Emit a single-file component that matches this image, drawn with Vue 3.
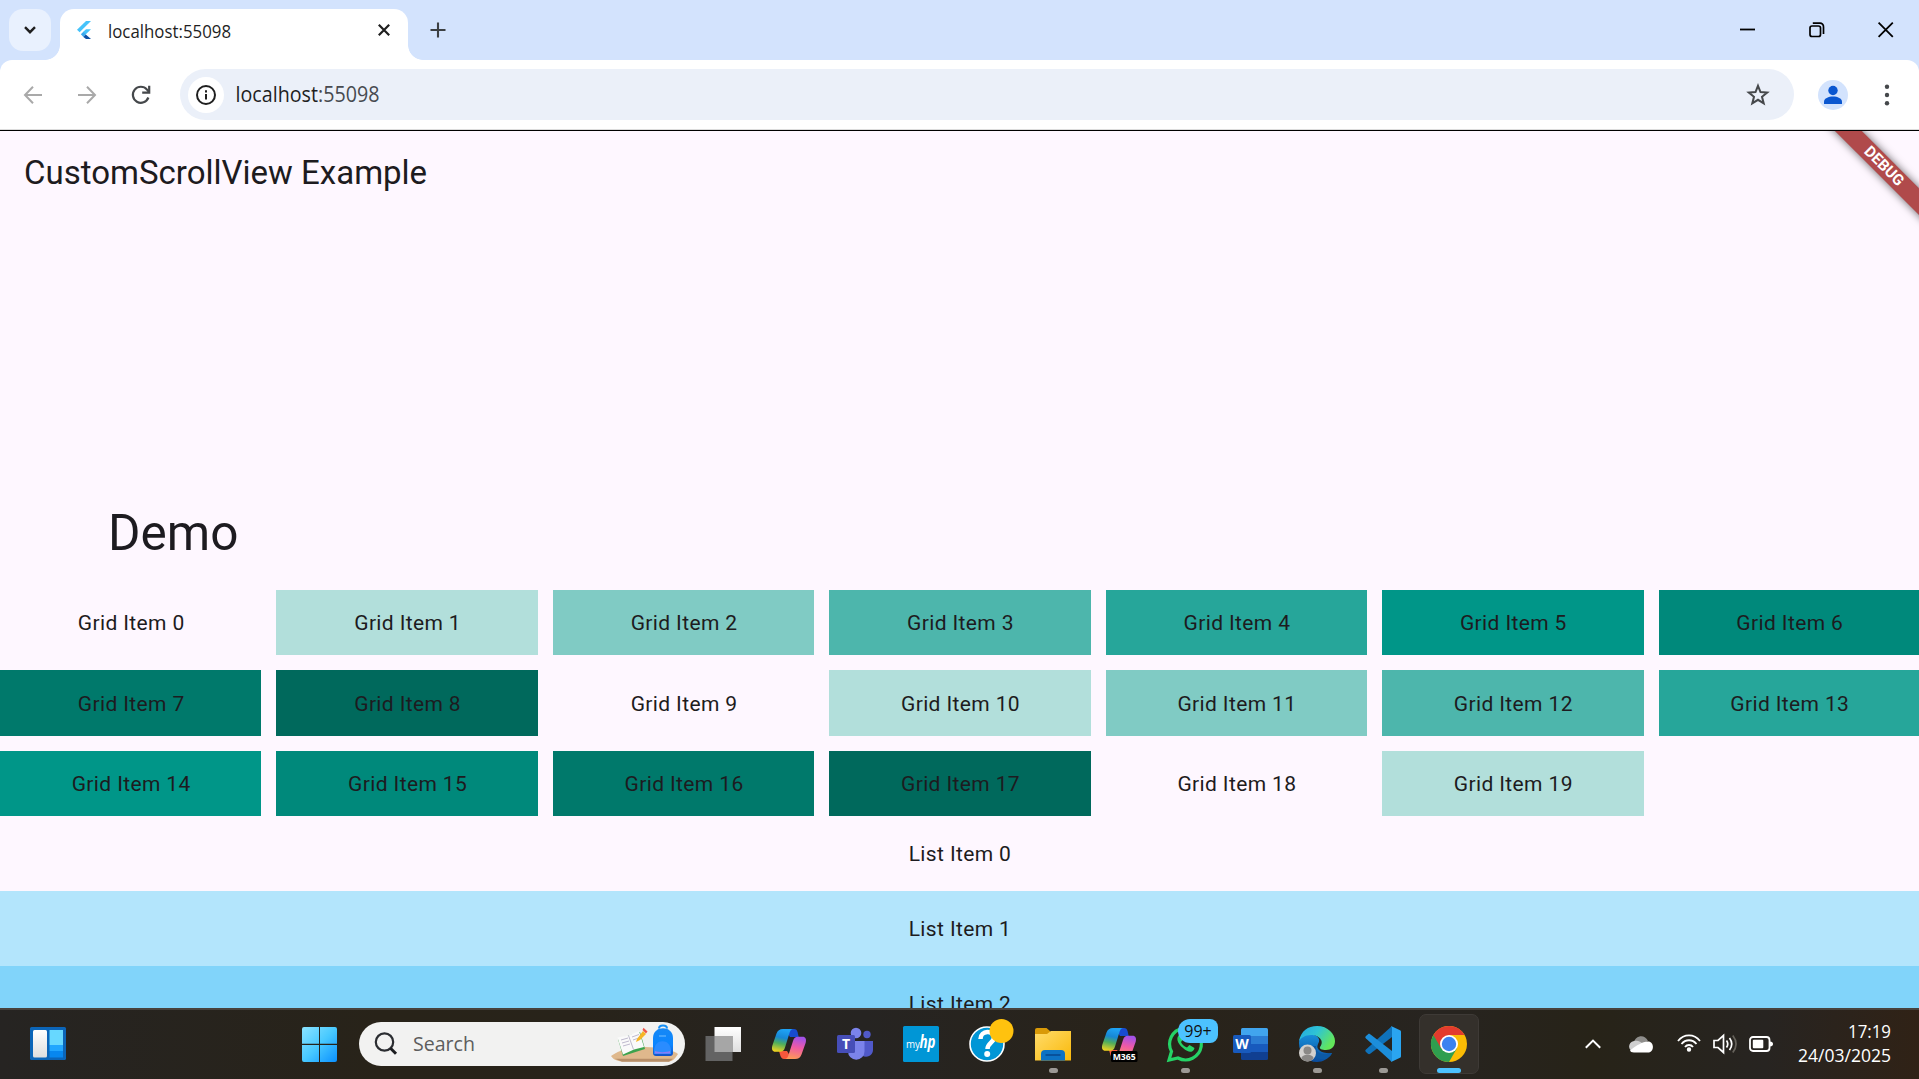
<script setup>
const shades = ['transparent', '#b2dfdb', '#80cbc4', '#4db6ac', '#26a69a', '#009688', '#00897b', '#00796b', '#00695c']
const gridItems = Array.from({ length: 20 }, (_, i) => ({ label: `Grid Item ${i}`, color: shades[i % 9] }))
const listItems = [
  { label: 'List Item 0', color: 'transparent' },
  { label: 'List Item 1', color: '#b3e5fc' },
  { label: 'List Item 2', color: '#81d4fa' },
]
</script>

<template>
  <div class="screen">
    <header class="tabstrip">
      <button class="tab-search" aria-label="Search tabs">
        <svg width="12" height="8" viewBox="0 0 12 8"><path d="M1 1.2l5 5 5-5" fill="none" stroke="#1f1f1f" stroke-width="2.4" /></svg>
      </button>
      <div class="tab">
        <svg class="flutter" width="14" height="18" viewBox="0 0 14 18">
          <path d="M9 0h5L2.6 11.3 0 8.8z" fill="#46c3fa" />
          <path d="M9 8.3h5L8.6 13.5 6 10.9z" fill="#46c3fa" />
          <path d="M3.9 13.2l2.4-2.5 2.6 2.6L6.4 16z" fill="#39a9ee" />
          <path d="M6.4 16l2.4-2.6 5.2 4.5H9z" fill="#0b4fa5" />
        </svg>
        <svg class="tab-title" width="130" height="30"><text x="0" y="22" textLength="123" lengthAdjust="spacingAndGlyphs">localhost:55098</text></svg>
        <svg class="tab-close" width="12" height="12" viewBox="0 0 12 12"><path d="M.8.8l10.4 10.4M11.2.8L.8 11.2" stroke="#1f1f1f" stroke-width="2.2" /></svg>
      </div>
      <svg class="plus" width="16" height="16" viewBox="0 0 16 16"><path d="M8 .5v15M.5 8h15" stroke="#3c4043" stroke-width="2.1" /></svg>
      <div class="window-controls">
        <svg width="16" height="16" viewBox="0 0 16 16"><path d="M0 7.5h15" stroke="#000" stroke-width="1.8" /></svg>
        <svg width="16" height="16" viewBox="0 0 16 16" fill="none" stroke="#000" stroke-width="1.7"><rect x="1" y="4" width="10.5" height="10.5" rx="2" /><path d="M3.8 1.2h7a3.5 3.5 0 0 1 3.7 3.7v7" /></svg>
        <svg width="16" height="16" viewBox="0 0 16 16"><path d="M.6.6l14.2 14.2M14.8.6L.6 14.8" stroke="#000" stroke-width="1.8" /></svg>
      </div>
    </header>

    <div class="toolbar-wrap">
      <div class="toolbar">
        <svg class="nav" width="20" height="20" viewBox="0 0 20 20" fill="none" stroke="#a9a9a9" stroke-width="2"><path d="M19 10H2.5M10 1.8L2 10l8 8.2" /></svg>
        <svg class="nav" width="20" height="20" viewBox="0 0 20 20" fill="none" stroke="#a9a9a9" stroke-width="2"><path d="M1 10h16.5M10 1.8l8 8.2-8 8.2" /></svg>
        <svg class="nav" width="20" height="20" viewBox="0 0 20 20" fill="none" stroke="#45484b" stroke-width="2.2"><path d="M17.4 12.5A8 8 0 1 1 16 4.6L18 7" /><path d="M18.2 .8v6.900h-7" /></svg>
        <div class="omnibox">
          <span class="info">
            <svg width="22" height="22" viewBox="0 0 22 22"><circle cx="11" cy="11" r="9" fill="none" stroke="#1f1f1f" stroke-width="2" /><path d="M11 10v5.5M11 6.3v2.2" stroke="#1f1f1f" stroke-width="2" /></svg>
          </span>
          <svg class="url" width="150" height="32"><text x="-.5" y="23" textLength="144" lengthAdjust="spacingAndGlyphs">localhost<tspan fill="#474a50">:55098</tspan></text></svg>
          <svg class="star" width="24" height="24" viewBox="0 0 24 24"><path d="M12 2.8l2.5 6.3 6.700.4-5.200 4.300 1.700 6.600-5.700-3.600-5.700 3.600L8 13.800 2.800 9.500l6.700-.4z" fill="none" stroke="#45484b" stroke-width="2" /></svg>
        </div>
        <svg class="avatar" width="30" height="30" viewBox="0 0 30 30"><circle cx="15" cy="15" r="15" fill="#d3e3fd" /><circle cx="15" cy="10.5" r="4.7" fill="#0b57d0" /><path d="M6 24v-2.5c0-3 4.500-5 9-5s9 2 9 5V24z" fill="#0b57d0" /></svg>
        <svg class="dots" width="6" height="24" viewBox="0 0 6 24" fill="#45484b"><circle cx="3" cy="3.7" r="2.2" /><circle cx="3" cy="12" r="2.2" /><circle cx="3" cy="20.3" r="2.2" /></svg>
      </div>
    </div>

    <main class="page">
      <div class="banner">DEBUG</div>
      <section class="appbar">
        <h1>CustomScrollView Example</h1>
        <h2>Demo</h2>
      </section>
      <section class="grid">
        <div v-for="item in gridItems" :key="item.label" class="cell" :style="{ background: item.color }">{{ item.label }}</div>
      </section>
      <section>
        <div v-for="item in listItems" :key="item.label" class="row" :style="{ background: item.color }">{{ item.label }}</div>
      </section>
    </main>

    <footer class="taskbar">
      <svg width="0" height="0" class="defs">
        <defs>
          <linearGradient id="cpA" x1=".4" y1="0" x2=".2" y2="1"><stop offset="0" stop-color="#1ea2f4" /><stop offset=".35" stop-color="#1787d4" /><stop offset=".62" stop-color="#4fae5c" /><stop offset="1" stop-color="#f6d51d" /></linearGradient>
          <linearGradient id="cpB" x1=".5" y1="0" x2=".3" y2="1"><stop offset="0" stop-color="#a352e8" /><stop offset=".45" stop-color="#ef5aa5" /><stop offset="1" stop-color="#ff9a55" /></linearGradient>
          <linearGradient id="win" x1="0" y1="0" x2="1" y2="1"><stop offset="0" stop-color="#8be3ff" /><stop offset=".5" stop-color="#48c9ff" /><stop offset="1" stop-color="#0a90ff" /></linearGradient>
          <linearGradient id="fold" x1="0" y1="0" x2="1" y2="1"><stop offset="0" stop-color="#ffdc6b" /><stop offset="1" stop-color="#fab90a" /></linearGradient>
          <linearGradient id="edgeTop" x1="0" y1="0" x2="1" y2=".5"><stop offset="0" stop-color="#22a7e4" /><stop offset=".5" stop-color="#2fc4d4" /><stop offset="1" stop-color="#63e65b" /></linearGradient>
          <linearGradient id="edgeLow" x1="0" y1="0" x2="0" y2="1"><stop offset="0" stop-color="#1790dc" /><stop offset="1" stop-color="#0b4b9b" /></linearGradient>
          <linearGradient id="white" x1="0" y1="0" x2="0" y2="1"><stop offset="0" stop-color="#fff" /><stop offset="1" stop-color="#dedede" /></linearGradient>
          <linearGradient id="bag" x1="0" y1="0" x2="0" y2="1"><stop offset="0" stop-color="#1688f5" /><stop offset=".6" stop-color="#0b85ff" /><stop offset="1" stop-color="#1252c9" /></linearGradient>
          <g id="copilot">
            <path d="M14 3h9c2 0 3 1.200 3.600 3.200L27.700 11H19z" fill="#174bd0" />
            <path d="M21 33h-8c-2 0-3-1.200-3.600-3.200L8 25h8z" fill="#f6573c" />
            <path d="M12 3h10c-2.200.4-3 2.200-3.800 5L14 21.500c-.9 2.900-2.300 4.200-5 4.200H4.500c-3.200 0-4.100-2.400-3.200-6L5.500 7.500C6.700 4.500 8.500 3 12 3z" fill="url(#cpA)" />
            <path d="M24 33H14c2.200-.4 3-2.200 3.800-5L22 15c.9-2.900 2.300-4.200 5-4.200h4.500c3.200 0 4.100 2.400 3.200 6l-4.200 11.700c-1.200 3-3 4.500-6.500 4.500z" fill="url(#cpB)" />
          </g>
        </defs>
      </svg>

      <svg class="widgets" width="36" height="33" viewBox="0 0 36 33">
        <rect width="36" height="33" rx="1.5" fill="#0b65b8" /><rect x="3" y="3" width="14" height="27.5" rx="1.5" fill="url(#white)" />
        <path d="M19.5 3H33v15H19.5z" fill="#67d8ff" /><path d="M19.5 18H33v6H19.5z" fill="#21a6ff" /><path d="M19.5 24H33v6.500H19.5z" fill="#0787ef" />
      </svg>
      <svg class="start" width="35" height="35" viewBox="0 0 35 35" fill="url(#win)">
        <path d="M2 0h15v16.700H0V2a2 2 0 0 1 2-2zM18 0h15a2 2 0 0 1 2 2v14.700H18zM0 18h17v17H2a2 2 0 0 1-2-2zM18 18h17v15a2 2 0 0 1-2 2H18z" />
      </svg>
      <div class="search">
        <svg width="24" height="24" viewBox="0 0 24 24"><circle cx="10.500" cy="10" r="8.700" fill="none" stroke="#2b2d31" stroke-width="2.200" /><path d="M16.500 16.200l5.500 5.500" stroke="#1c1d20" stroke-width="3" /></svg>
        <svg class="search-text" width="66" height="32"><text x="0" y="23" textLength="62" lengthAdjust="spacingAndGlyphs">Search</text></svg>
        <svg class="school" width="68" height="38" viewBox="0 0 68 38">
          <path d="M0 31c8-6 20-9 34-9s28 3 33 7c-3 5-6 7.500-9 7.500H11C5 36 2 34 0 31z" fill="#dfb88c" /><path d="M4 33.700h58l-4 3H11z" fill="#b78e68" />
          <path d="M7 14l22-7 5 17-22 7z" fill="#3da34d" /><path d="M6.500 12.500l11-2L28 6l5 16-10 2.500-11 5z" fill="#fafafa" /><path d="M17.500 10.500l5 14M10 15l7-2M11 18l7-2M12 21l7-2M21 12l7-2.500M22 15l7-2.500" stroke="#b8b2c8" stroke-width=".9" />
          <path d="M26 14l6-8 3 3-6 6-4 2z" fill="#f6b526" /><path d="M31.500 5L35 8.500l1.500-2-4-3.800z" fill="#ef5549" />
          <path d="M48 3.500c0-4 8-4 8 0" fill="none" stroke="#168ff5" stroke-width="2" /><path d="M42 13c0-13 20-13 20 0v15a3 3 0 0 1-3 3H45a3 3 0 0 1-3-3z" fill="url(#bag)" /><path d="M43 26c0-13 17-13 17 0v3H43z" fill="#2a8cff" /><path d="M44 26c3 1.500 12 1.500 15 0v2.500H44z" fill="#8a7cf5" /><path d="M48 11h7" stroke="#77bfff" stroke-width="1" />
        </svg>
      </div>
      <div class="apps">
        <span class="app"><svg viewBox="0 0 36 36"><path d="M9.500 1h26.500v25H9.500z" fill="url(#white)" /><path d="M.5 10h27v25H.5z" fill="#636363" /><path d="M9.500 10h18v16h-18z" fill="#a6a6a6" /></svg></span>
        <span class="app"><svg viewBox="0 0 36 36"><use href="#copilot" /></svg></span>
        <span class="app"><svg viewBox="0 0 36 36"><circle cx="30" cy="8.500" r="3.700" fill="#5059c9" /><path d="M25 15h11v9a7 7 0 0 1-11 5.500z" fill="#5059c9" /><circle cx="19" cy="7" r="5.300" fill="#7b83eb" /><path d="M11 15h16.500v10.500a8.200 8.200 0 0 1-16.500 0z" fill="#7b83eb" /><rect x="0" y="9" width="18" height="18" rx="1.500" fill="#464eb8" /><text x="9" y="23" class="glyph">T</text></svg></span>
        <span class="app"><svg viewBox="0 0 36 36"><rect width="36" height="36" rx="1.500" fill="#0096d6" /><text x="3" y="21.500" class="my" textLength="14" lengthAdjust="spacingAndGlyphs">my</text><text x="16.500" y="22" class="hp" textLength="16" lengthAdjust="spacingAndGlyphs">hp</text></svg></span>
        <span class="app"><svg viewBox="0 0 36 36"><circle cx="18" cy="18" r="17" fill="#0096d6" stroke="#fff" stroke-width="1.600" /><path d="M11.500 13c0-9 13.500-9 13.500-1.500 0 5-6.500 5.500-6.500 11.500" fill="none" stroke="#fff" stroke-width="4.500" /><circle cx="18.200" cy="28" r="3" fill="#fff" /><circle cx="32.500" cy="5" r="12" fill="#ffc20e" /></svg></span>
        <span class="app dot"><svg viewBox="0 0 36 36"><path d="M0 4a2 2 0 0 1 2-2h9.500l4 3.500V10H0z" fill="#d99a08" /><path d="M0 8h12l4-3h20v29.500H0z" fill="url(#fold)" /><path d="M6 34.500V28a4 4 0 0 1 4-4h16a4 4 0 0 1 4 4v6.500z" fill="#0d72c4" /><path d="M10.500 29h15" stroke="#084a91" stroke-width="1.600" /></svg></span>
        <span class="app"><svg viewBox="0 0 36 36"><use href="#copilot" transform="translate(0 -1)" /><rect x="10" y="25" width="26.500" height="11" rx="1.500" fill="#000" /><text x="23.200" y="34" class="m365" textLength="23" lengthAdjust="spacingAndGlyphs">M365</text></svg></span>
        <span class="app dot"><svg viewBox="0 0 36 36"><path d="M2 34l2.500-8.500A15.900 15.900 0 1 1 11 32z" fill="none" stroke="#25d366" stroke-width="3.200" /><path d="M12 9c-3 3-2 8 4 13 5 4.500 9 5 11 1.500l.5-1.500-5-3-2.500 2.500c-3-1-5-3-6-5.500l2-2.500-2-5z" fill="#25d366" /></svg><b class="count">99+</b></span>
        <span class="app"><svg viewBox="0 0 36 36"><path d="M8 3.500A1.500 1.500 0 0 1 9.500 2h24A1.500 1.500 0 0 1 35 3.500V10H8z" fill="#41a5ee" /><path d="M8 10h27v8H8z" fill="#2b7cd3" /><path d="M8 18h27v8H8z" fill="#185abd" /><path d="M8 26h27v6.500a1.500 1.500 0 0 1-1.500 1.500h-24A1.500 1.500 0 0 1 8 32.500z" fill="#103f91" /><rect y="9" width="18" height="18" rx="1.500" fill="#185abd" /><text x="9" y="23" class="glyph">W</text></svg></span>
        <span class="app dot"><svg viewBox="0 0 36 36"><path d="M0 17C0 8 9 7 15 9c6 2 6 6 4 9-3 6 5 10 14 9-4 6-9 9-15 9C8 36 0 28 0 17z" fill="url(#edgeLow)" /><path d="M13 20c-2 8 5 15 14 13 4-2 6-5 6-6-9 3-17 0-16-7z" fill="#0c59a4" /><path d="M0 15C2 5 9 0 18 0c11 0 18 8 18 15 0 6-4 9-9 9-4 0-7-1-6-3 5-6-1-12-9-12C6 9 2 12 0 15z" fill="url(#edgeTop)" /><circle cx="8.500" cy="27" r="8.500" fill="#d2d0ce" /><circle cx="8.500" cy="24.500" r="4" fill="#8a8886" /><path d="M2.500 32.500c0-5 12-5 12 0-3 4-9 4-12 0z" fill="#8a8886" /></svg></span>
        <span class="app dot"><svg viewBox="0 0 36 36"><path d="M27 0L1 23.500c-1 1-1 1.500 0 2.500l2 1.800c.7.600 1.300.600 2.200 0L27 11z" fill="#0f72ba" /><path d="M27 36L1 12.500c-1-1-1-1.500 0-2.500l2-1.800c.7-.6 1.300-.6 2.200 0L27 25z" fill="#1c8edb" /><path d="M26 0l9 4.200c.7.300 1 .8 1 1.600v24.400c0 .8-.3 1.300-1 1.600L26 36c1-1 1-2 1-3V3c0-1 0-2-1-3z" fill="#2aa5f1" /></svg></span>
        <span class="app active"><svg viewBox="0 0 36 36"><circle cx="18" cy="18" r="18" fill="#fbbc05" /><path d="M18 18L2.400 9A18 18 0 0 0 18 36l7.800-13.500z" fill="#2f9e4f" /><path d="M2.400 9A18 18 0 0 1 33.600 9H18v9l-7.800 4.500z" fill="#e33b2e" /><circle cx="18" cy="18" r="9" fill="#fff" /><circle cx="18" cy="18" r="7.200" fill="#3b82f1" /></svg></span>
      </div>
      <div class="tray">
        <svg class="chev" width="16" height="10" viewBox="0 0 16 10"><path d="M.8 8.800L8 1.600l7.200 7.200" fill="none" stroke="#fff" stroke-width="2" /></svg>
        <svg class="cloud" width="24" height="17" viewBox="0 0 24 17"><path d="M5 6C7-1 16-2 19 5l-7 4z" fill="#8f8e8c" /><path d="M5 5c4-1 7 1 9 3l-9 7.500C-1.500 15-1.500 6 5 5z" fill="#cfcfcf" /><path d="M19 5.500c6.500 0 6.500 11 0 11H5c-2.500 0-3.500-1-4-2C8 9 13 6 19 5.500z" fill="#fff" /></svg>
        <svg class="wifi" width="24" height="18" viewBox="0 0 24 18" fill="none" stroke="#fff" stroke-width="1.800"><path d="M1 7c6-7.500 16-7.500 22 0M4.500 10c4-5 11-5 15 0M8 13c2-2.700 6-2.700 8 0" /><circle cx="12" cy="15.500" r="1.300" fill="#fff" /></svg>
        <svg class="speaker" width="25" height="20" viewBox="0 0 25 20" fill="none" stroke="#fff" stroke-width="1.700"><path d="M1 6.500h4L10.500 1.500v17L5 13.500H1z" /><path d="M13.500 6.500q2.500 3.500 0 7M16.500 4q4.500 6 0 12" /><path d="M19.800 1.500q6.500 8.500 0 17" stroke="#66625b" /></svg>
        <svg class="battery" width="25" height="16" viewBox="0 0 25 16"><rect x="1" y="1" width="19.500" height="14" rx="3" fill="none" stroke="#fff" stroke-width="1.800" /><rect x="3.800" y="3.800" width="10.500" height="8.500" rx="1" fill="#fff" /><path d="M21 5.500c4 0 4 5 0 5z" fill="#fff" /></svg>
        <svg class="clock" width="94" height="52"><text x="50" y="19.500" textLength="43" lengthAdjust="spacingAndGlyphs">17:19</text><text x="0" y="44" textLength="93" lengthAdjust="spacingAndGlyphs">24/03/2025</text></svg>
      </div>
    </footer>
  </div>
</template>

<style>
body { margin: 0; overflow: hidden; }
</style>

<style scoped>
* { box-sizing: border-box; }
svg { display: block; flex: none; overflow: visible; }
.screen { width: 1919px; height: 1079px; display: flex; flex-direction: column; overflow: hidden; background: #fff; font-family: "Open Sans", "Noto Sans", sans-serif; }

.tabstrip { height: 60px; flex: none; display: flex; align-items: center; background: #d3e3fd; padding-left: 9px; }
.tab-search { width: 42px; height: 42px; flex: none; border: 0; padding: 0; border-radius: 14px; background: #e9f1fe; display: flex; align-items: center; justify-content: center; }
.tab { position: relative; width: 348px; height: 51px; flex: none; align-self: flex-end; margin-left: 9px; padding: 0 18px 9px 17px; display: flex; align-items: center; background: #fff; border-radius: 14px 14px 0 0; }
.tab::before, .tab::after { content: ""; position: absolute; bottom: 0; width: 15px; height: 15px; }
.tab::before { right: 100%; background: radial-gradient(circle at 0 0, transparent 14.5px, #fff 15.2px); }
.tab::after { left: 100%; background: radial-gradient(circle at 100% 0, transparent 14.5px, #fff 15.2px); }
.tab-title { margin-left: 17px; margin-top: 2px; }
.tab-title text { font-size: 18px; fill: #1f1f1f; }
.tab-close { margin-left: auto; }
.plus { margin-left: 22px; }
.window-controls { margin-left: auto; margin-right: 25px; display: flex; gap: 53px; }

.toolbar-wrap { height: 71px; flex: none; background: linear-gradient(#d3e3fd, #d3e3fd) top / 100% 20px no-repeat #fff; border-bottom: 1px solid #000; }
.toolbar { height: 70px; background: #fff; border-radius: 12px 12px 0 0; border-bottom: 1px solid #dcdcdc; display: flex; align-items: center; padding-left: 23px; }
.nav { margin-right: 34px; }
.omnibox { width: 1614px; height: 51px; flex: none; margin-left: -5px; display: flex; align-items: center; background: #ebf0f9; border-radius: 26px; padding-left: 8px; padding-right: 24px; }
.info { width: 36px; height: 36px; border-radius: 50%; background: #fff; display: flex; align-items: center; justify-content: center; }
.url { margin-left: 12px; }
.url text { font-size: 21px; fill: #1f1f1f; }
.star { margin-left: auto; }
.avatar { margin-left: 24px; }
.dots { margin-left: 36px; }

.page { position: relative; flex: 1; min-height: 0; overflow: hidden; background: #fef7ff; color: #1d1b20; font-family: Roboto, sans-serif; }
.appbar { height: 459px; display: flex; flex-direction: column; justify-content: space-between; }
h1, h2 { margin: 0; font-weight: 400; }
h1 { font-size: 33px; line-height: 84px; padding-left: 24px; }
h2 { font-size: 49.5px; line-height: 66px; padding: 0 0 24px 108px; }
.grid { width: 1920px; display: grid; grid-template-columns: repeat(7, 1fr); grid-auto-rows: 65.36px; gap: 15px; }
.cell, .row { display: flex; align-items: center; justify-content: center; font-size: 21px; letter-spacing: 0.375px; padding-left: 1px; }
.cell:nth-child(n + 8) { padding-top: 1px; }
.row { height: 75px; }
.banner { position: absolute; top: 26px; left: 1784px; width: 200px; height: 18.5px; transform: rotate(45deg); background: #b04a4b; box-shadow: 0 0 9px rgba(0, 0, 0, 0.6); color: #fff; font-size: 15.3px; line-height: 18px; font-weight: 700; text-align: center; }

.taskbar { height: 71px; flex: none; border-top: 2px solid #47423d; background: linear-gradient(90deg, #262422, #282319 20%, #28231a 30%, #262422 45%, #292319 60%, #272420 75%, #272318 83%, #272421 92%, #302216); display: flex; align-items: center; padding-left: 30px; padding-bottom: 1px; }
.defs { position: absolute; }
.widgets { margin-top: -1px; }
.start { margin-left: 236px; }
.search { width: 326px; height: 44px; flex: none; margin-left: 22px; border-radius: 22px; background: #f2f2f1; display: flex; align-items: center; padding-left: 15px; }
.search-text { margin-left: 15px; }
.search-text text { font-size: 20.5px; fill: #5d5d5d; }
.school { margin-left: auto; margin-right: 6px; }
.apps { display: flex; margin-left: 5px; }
.app { position: relative; width: 66px; height: 60px; display: flex; align-items: center; justify-content: center; }
.app svg { width: 36px; height: 36px; }
.dot::after, .active::after { content: ""; position: absolute; bottom: 1px; left: 28.5px; width: 9px; height: 5px; border-radius: 3px; background: #9c9995; }
.active::before { content: ""; position: absolute; inset: 0 3px; border-radius: 7px; background: #34302b; border: 1px solid #3e3a36; }
.active svg { position: relative; }
.active::after { left: 21px; width: 24px; background: #4cc2ff; }
.count { position: absolute; left: 26px; top: 5px; width: 40px; height: 24px; border-radius: 12px 8px 8px 12px; background: #4cc2ff; color: #111; font: 400 16px/24px "Open Sans", sans-serif; text-align: center; }
.glyph { font: 700 14px "Open Sans", sans-serif; fill: #fff; text-anchor: middle; }
.my { font: 400 11px "Open Sans", sans-serif; fill: #fff; }
.hp { font: italic 700 17px "Open Sans", sans-serif; fill: #fff; }
.m365 { font: 700 9.5px "Open Sans", sans-serif; fill: #fff; text-anchor: middle; }
.tray { margin-left: auto; display: flex; align-items: center; padding-right: 27px; }
.cloud { margin-left: 28px; }
.wifi { margin-left: 24px; margin-top: -2px; }
.speaker { margin-left: 12px; }
.battery { margin-left: 11px; }
.clock { margin-left: 24px; }
.clock text { font-size: 17.5px; fill: #fff; }
</style>
